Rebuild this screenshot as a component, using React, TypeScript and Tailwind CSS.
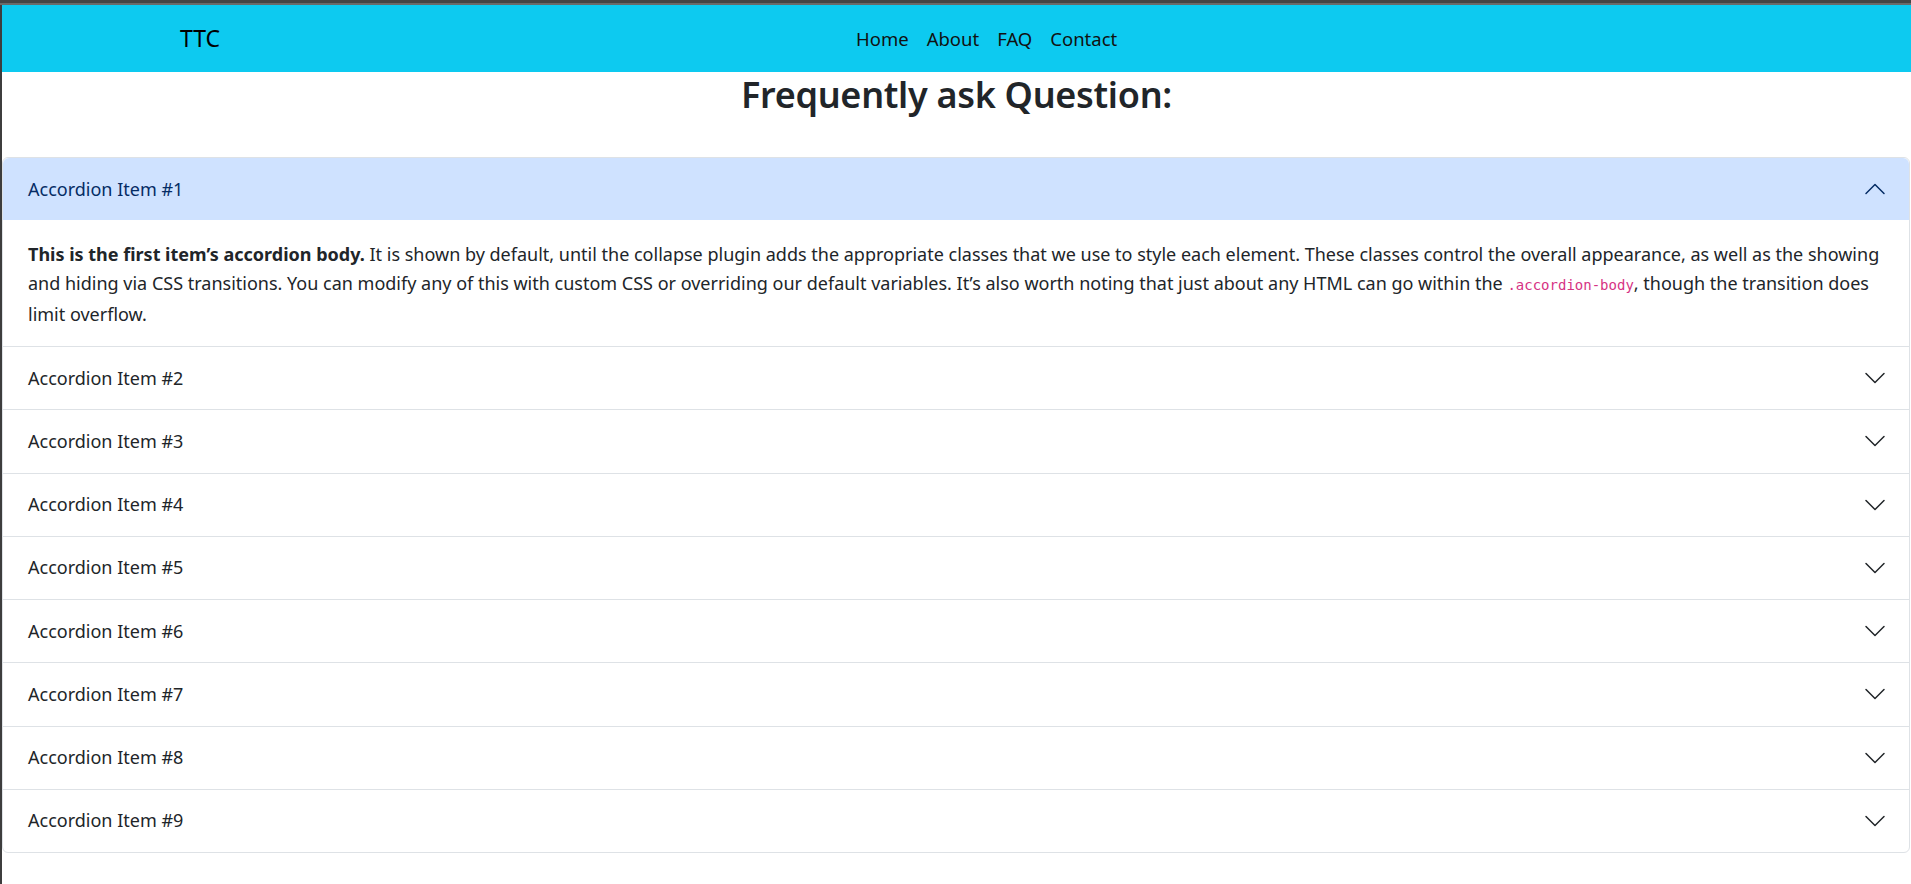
import React from 'react';

const Chevron: React.FC<{ up?: boolean }> = ({ up }) => (
  <svg
    viewBox="0 0 16 16"
    className={`w-[24px] h-[24px] shrink-0 ${up ? 'rotate-180' : ''}`}
    fill="none"
    stroke="currentColor"
    strokeWidth={1}
    strokeLinecap="round"
    strokeLinejoin="round"
  >
    <path d="M2 5L8 11L14 5" />
  </svg>
);

const items = [2, 3, 4, 5, 6, 7, 8, 9];

export default function App() {
  return (
    <div className="min-h-screen bg-white flex flex-col font-['Noto_Sans',sans-serif] text-[#212529]">
      {/* window frame */}
      <div className="h-[3px] bg-[#454545]" />
      <div className="h-[2px] bg-[#6a6a6a]" />

      <div className="flex flex-1">
        <div className="w-[2px] shrink-0 bg-[#3d3d3d]" />

        <div className="flex-1 min-w-0">
          {/* Navbar */}
          <nav className="h-[67px] bg-[#0dcaf0] flex items-center">
            <a href="#" className="pl-[178px] w-[845px] shrink-0 text-[23px] text-black">
              TTC
            </a>
            <ul className="flex items-center">
              {['Home', 'About', 'FAQ', 'Contact'].map((l) => (
                <li key={l}>
                  <a href="#" className="px-[9px] text-[18.5px] text-[#111]">
                    {l}
                  </a>
                </li>
              ))}
            </ul>
          </nav>

          <h1 className="text-center text-[36px] tracking-[-0.3px] font-semibold leading-[46px] mb-[39px]">
            Frequently ask Question:
          </h1>

          {/* Accordion */}
          <div className="border border-[#dee2e6] rounded-[6px] mr-[1px]">
            <div>
              <button className="w-full h-[62px] flex items-center justify-between pl-[25px] pr-[22px] bg-[#cfe2ff] text-[#052c65] text-[18px] rounded-t-[6px] text-left">
                <span>Accordion Item #1</span>
                <Chevron up />
              </button>
              <div className="pl-[25px] pr-[12px] pt-[20px] pb-[17px] text-[18px] leading-[29px] border-b border-[#dee2e6]">
                <strong className="font-bold">This is the first item’s accordion body.</strong> It is shown by default, until the collapse plugin adds the appropriate classes that we use to style each element. These classes control the overall appearance, as well as the showing and hiding via CSS transitions. You can modify any of this with custom CSS or overriding our default variables. It’s also worth noting that just about any HTML can go within the{' '}
                <code className="font-['DejaVu_Sans_Mono',monospace] text-[14px] text-[#d63384]">.accordion-body</code>, though the transition does limit overflow.
              </div>
            </div>

            {items.map((n, i) => (
              <div key={n} className={i < items.length - 1 ? 'border-b border-[#dee2e6]' : ''}>
                <button className="w-full h-[62.25px] flex items-center justify-between pl-[25px] pr-[22px] text-[18px] text-[#212529] text-left">
                  <span>Accordion Item #{n}</span>
                  <Chevron />
                </button>
              </div>
            ))}
          </div>
        </div>
      </div>
    </div>
  );
}
